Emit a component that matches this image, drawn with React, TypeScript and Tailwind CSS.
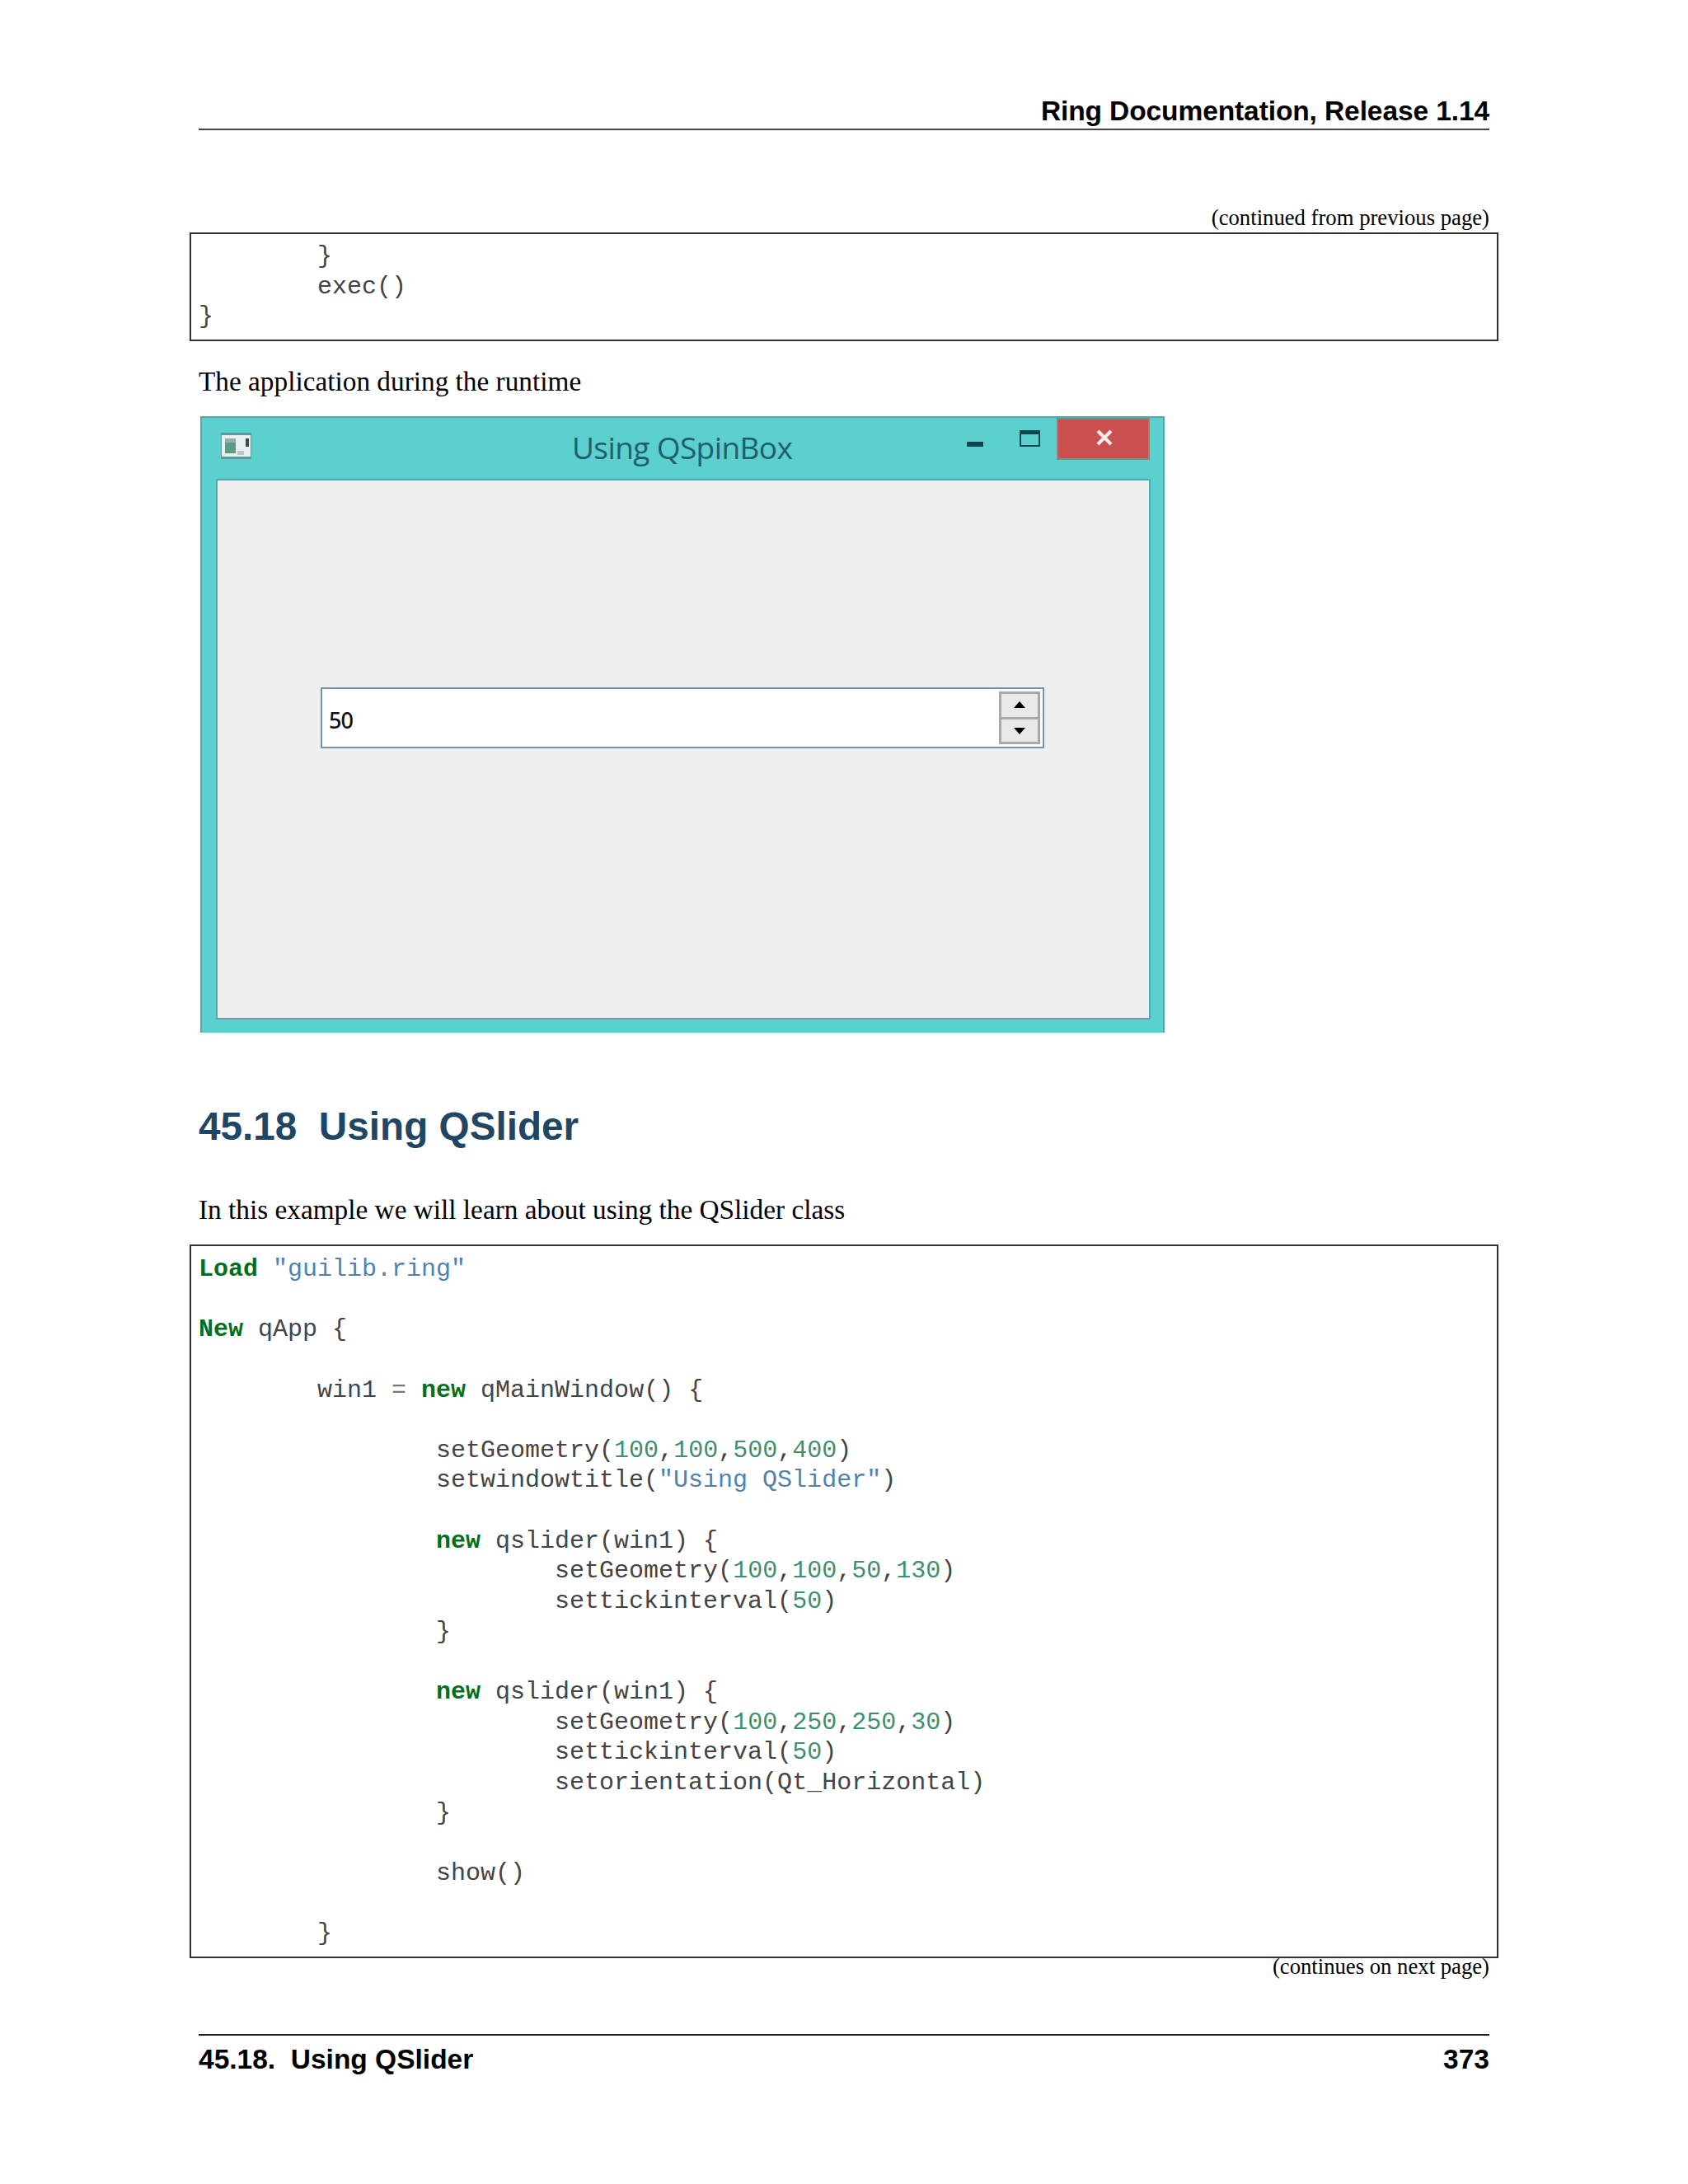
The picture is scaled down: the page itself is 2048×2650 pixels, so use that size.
const mono = "font-['Liberation_Mono',monospace] text-[30px] leading-[36.65px] text-[#444444] whitespace-pre";

const K = ({ children }: { children: string }) => <span className="font-bold text-[#007020]">{children}</span>;
const S = ({ children }: { children: string }) => <span className="text-[#5580aa]">{children}</span>;
const N = ({ children }: { children: string }) => <span className="text-[#3f9070]">{children}</span>;
const O = ({ children }: { children: string }) => <span className="text-[#777777]">{children}</span>;

function Geo({ a }: { a: string[] }) {
  return (
    <>
      setGeometry(
      {a.map((v, i) => (
        <span key={i}>
          <N>{v}</N>
          {i < a.length - 1 ? "," : ""}
        </span>
      ))}
      )
    </>
  );
}

const T8 = "        ";
const T16 = T8 + T8;
const T24 = T16 + T8;

function Line({ children }: { children?: React.ReactNode }) {
  return <div className="h-[36.65px]">{children}</div>;
}

export default function App() {
  return (
    <div className="w-[2048px] h-[2650px] bg-white flex flex-col pl-[241px] pr-[241px] font-['Liberation_Serif',serif] text-black">
      <div className="mt-[110px] h-[48px] border-b-2 border-[#444444] flex items-end justify-end font-['Liberation_Sans',sans-serif] font-bold text-[33.5px] leading-[42px] tracking-[-0.1px]">
        Ring Documentation, Release 1.14
      </div>

      <div className="mt-[89px] h-[35px] text-right text-[26.7px] leading-[34px]">(continued from previous page)</div>
      <div className={"-mx-[11px] h-[132px] border-2 border-[#333333] pl-[9px] pt-[9px] " + mono}>
        <Line>{T8}{"}"}</Line>
        <Line>{T8}exec()</Line>
        <Line>{"}"}</Line>
      </div>

      <p className="mt-[29px] text-[33.3px] leading-[40px]">The application during the runtime</p>

      <div className="mt-[22px] ml-[2px] w-[1170px] h-[748px] bg-[#5ccfcf] border-t-2 border-l-2 border-r-2 border-[#54a8ad] flex flex-col">
        <div className="h-[74px] flex items-start">
          <svg width="37" height="32" viewBox="0 0 37 32" className="ml-[23px] mt-[18px] shrink-0">
            <rect x="0" y="0" width="37" height="32" fill="#5f9a9e" />
            <rect x="1" y="3" width="35" height="26" fill="#e9efef" />
            <rect x="5" y="7" width="13" height="18" fill="#5c9c84" />
            <rect x="5" y="7" width="13" height="5" fill="#8fb0ad" />
            <rect x="20" y="22" width="8" height="5" fill="#b9c6c6" />
            <rect x="30" y="7" width="4" height="10" fill="#3d4a4c" />
          </svg>
          <div className="ml-[389px] mt-[11px] w-[267px] text-center font-['Open_Sans',sans-serif] text-[37px] leading-[50px] tracking-[-0.6px] text-[#20606a] whitespace-nowrap">
            Using QSpinBox
          </div>
          <div className="ml-[212px] mt-[29px] w-[20px] h-[6px] bg-[#0d4750]" />
          <div className="ml-[44px] mt-[15px] w-[25px] h-[20px] border-2 border-t-[5px] border-[#0d4750]" />
          <div className="ml-[20px] w-[113px] h-[51px] bg-[#c9504f] border-2 border-[#8f8587] flex items-center justify-center">
            <svg width="22" height="22" viewBox="0 0 22 22" className="-mt-[3px] ml-[2px]">
              <path d="M3 3 L19 19 M19 3 L3 19" stroke="#f8eeee" strokeWidth="4" />
            </svg>
          </div>
        </div>
        <div className="ml-[17px] w-[1134px] h-[656px] bg-[#efefef] border-2 border-[#54a8ad] pl-[125px] pt-[251px]">
          <div className="w-[878px] h-[74px] bg-white border-2 border-[#6d95b5] flex items-center justify-between pl-[8px] pr-[3px]">
            <span className="pt-[5px] font-['Noto_Sans',sans-serif] font-medium text-[27px] leading-[36px] tracking-[-1px] text-[#111111]">50</span>
            <div className="w-[50px] h-[64px] bg-[#e9e9e9] border-[3px] border-[#a9a9a9] flex flex-col">
              <div className="h-[31px] border-b-[3px] border-[#a9a9a9] flex items-center justify-center pb-[2px]">
                <svg width="14" height="8" viewBox="0 0 14 8"><path d="M7 0 L14 8 L0 8 Z" fill="#000000" /></svg>
              </div>
              <div className="flex-1 flex items-center justify-center">
                <svg width="14" height="8" viewBox="0 0 14 8"><path d="M0 0 L14 0 L7 8 Z" fill="#000000" /></svg>
              </div>
            </div>
          </div>
        </div>
      </div>

      <h2 className="mt-[84px] h-[60px] font-['Liberation_Sans',sans-serif] font-bold text-[47.7px] leading-[60px] text-[#1f4765] whitespace-pre">
        45.18  Using QSlider
      </h2>

      <p className="mt-[51px] text-[33.3px] leading-[40px]">In this example we will learn about using the QSlider class</p>

      <div className={"mt-[22px] -mx-[11px] h-[866px] border-2 border-[#333333] pl-[9px] pt-[10px] " + mono}>
        <Line><K>Load</K> <S>"guilib.ring"</S></Line>
        <Line />
        <Line><K>New</K> qApp {"{"}</Line>
        <Line />
        <Line>{T8}win1 <O>=</O> <K>new</K> qMainWindow() {"{"}</Line>
        <Line />
        <Line>{T16}<Geo a={["100", "100", "500", "400"]} /></Line>
        <Line>{T16}setwindowtitle(<S>"Using QSlider"</S>)</Line>
        <Line />
        <Line>{T16}<K>new</K> qslider(win1) {"{"}</Line>
        <Line>{T24}<Geo a={["100", "100", "50", "130"]} /></Line>
        <Line>{T24}settickinterval(<N>50</N>)</Line>
        <Line>{T16}{"}"}</Line>
        <Line />
        <Line>{T16}<K>new</K> qslider(win1) {"{"}</Line>
        <Line>{T24}<Geo a={["100", "250", "250", "30"]} /></Line>
        <Line>{T24}settickinterval(<N>50</N>)</Line>
        <Line>{T24}setorientation(Qt_Horizontal)</Line>
        <Line>{T16}{"}"}</Line>
        <Line />
        <Line>{T16}show()</Line>
        <Line />
        <Line>{T8}{"}"}</Line>
      </div>

      <div className="h-[24px] text-right text-[26.7px] leading-[20px]">(continues on next page)</div>

      <div className="mt-[68px] border-t-2 border-[#222222] pt-[7px] flex justify-between font-['Liberation_Sans',sans-serif] font-bold text-[33.5px] leading-[44px] whitespace-pre">
        <span>45.18.  Using QSlider</span>
        <span>373</span>
      </div>
    </div>
  );
}
